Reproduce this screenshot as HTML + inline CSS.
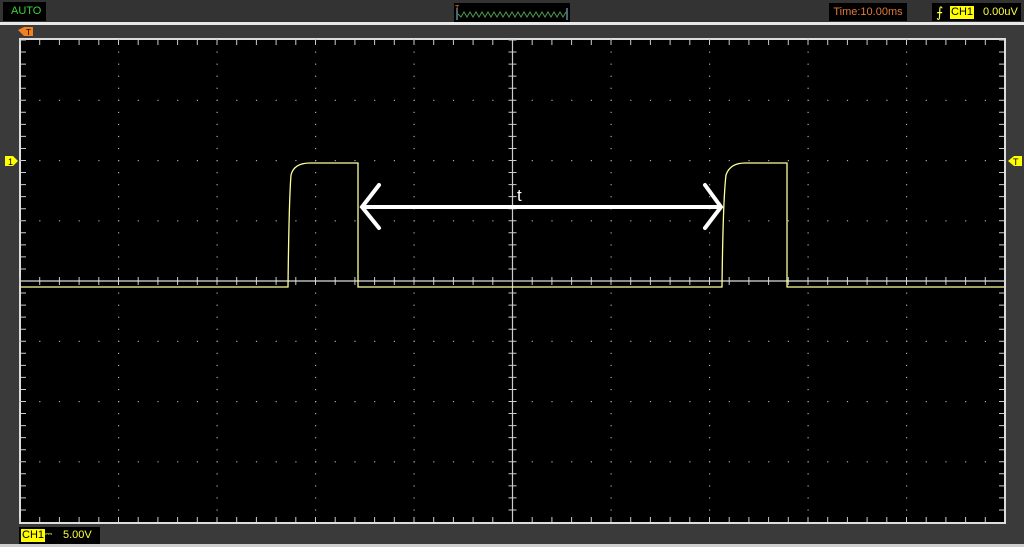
<!DOCTYPE html>
<html><head><meta charset="utf-8"><style>
body{margin:0;width:1024px;height:547px;background:#3a3a3a;overflow:hidden;font-family:"Liberation Sans",sans-serif;position:relative}
.top{position:absolute;left:0;top:0;width:1024px;height:22px;background:#333}
.line{position:absolute;left:0;top:22px;width:1024px;height:3px;background:#e8e8e8}
.box{position:absolute;background:#000;font-size:11px;line-height:18px}
</style></head><body>
<div class="top"></div><div class="line"></div>
<div class="box" style="left:3px;top:2px;width:43px;height:19px;color:#3fcf3f;padding-left:8px;box-sizing:border-box">AUTO</div>
<div class="box" style="left:829px;top:3px;width:78px;height:18px;color:#e07a3a;text-align:center">Time:10.00ms</div>
<div class="box" style="left:932px;top:3px;width:89px;height:18px;color:#ffff40"><span style="position:absolute;left:4px;top:0;font-size:14px">&#x2A0D;</span><span style="position:absolute;left:18px;top:3px;height:13px;line-height:13px;background:#ffff00;color:#000;padding:0 1px">CH1</span><span style="position:absolute;left:51px;top:0">0.00uV</span></div>
<div class="box" style="left:19px;top:527px;width:81px;height:17px;color:#ffff40;line-height:17px"><span style="position:absolute;left:2px;top:2px;height:13px;line-height:13px;background:#ffff00;color:#000;padding:0 1px">CH1</span><span style="position:absolute;left:26px;top:-1px;font-size:9px">&#x2393;</span><span style="position:absolute;left:44px;top:0">5.00V</span></div>
<div style="position:absolute;left:0;top:544px;width:1024px;height:3px;background:#cfcfcf"></div>
<svg width="1024" height="547" style="position:absolute;left:0;top:0">
<rect x="454" y="3" width="116" height="19" fill="#000"/>
<path d="M457,8V20M567,8V20" stroke="#7ac" stroke-width="1.2"/>
<path id="zz" fill="none" stroke="#4a9a4a" stroke-width="1"/>
<text x="455" y="10" fill="#e07a3a" font-size="7">T</text>
<path d="M18,30 L24,27 H33 V36 H24 Z" fill="#f08020"/><text x="26" y="35" font-size="8" fill="#000">T</text>
<path d="M5,156 H13 L18,161 L13,166 H5 Z" fill="#ffff00"/><text x="8" y="165" font-size="9" fill="#000">1</text>
<path d="M1022,156 H1014 L1008,161 L1014,166 H1022 Z" fill="#ffff00"/><text x="1013" y="165" font-size="9" fill="#000">T</text>
<rect x="20" y="39" width="985" height="484" fill="#000" stroke="#ddd" stroke-width="2"/>
<g id="g"></g>
<line x1="20" y1="281" x2="1005" y2="281" stroke="#ddd" stroke-width="1.2"/>
<line x1="512.5" y1="40" x2="512.5" y2="522" stroke="#ccc" stroke-width="1.2"/>
<path d="M21,287 H288 Q289,200 291,175 Q294,163 310,163 H358 V287 H722 Q723,200 726,175 Q730,163 745,163 H787 V287 H1004" fill="none" stroke="#ffff99" stroke-width="1.3"/>
<path d="M362,207 H720" stroke="#fff" stroke-width="4"/>
<path d="M379,185 L362,207 L379,228 M705,185 L721,207 L705,228" fill="none" stroke="#fff" stroke-width="4" stroke-linecap="round"/>
<text x="517" y="201" fill="#fff" font-size="17">t</text>
</svg>
<script>
var g=document.getElementById('g'),s='';
var x0=20,x1=1005,y0=40,y1=522,dx=(x1-x0)/10,dy=(y1-y0)/8;
for(var i=1;i<10;i++){var x=x0+i*dx;for(var y=y0;y<y1;y+=dy/5)s+='<rect x="'+(x-0.5)+'" y="'+(y-0.5)+'" width="1.2" height="1.2" fill="#aaa"/>';}
for(var j=1;j<8;j++){var y=y0+j*dy;for(var x=x0;x<x1;x+=dx/5)s+='<rect x="'+(x-0.5)+'" y="'+(y-0.5)+'" width="1.2" height="1.2" fill="#aaa"/>';}
var xc=x0+5*dx;
for(var x=x0;x<x1;x+=dx/5){s+='<path d="M'+x+',40v5M'+x+',522v-5M'+x+',277v8" stroke="#ccc"/>';}
for(var y=y0;y<y1;y+=dy/5){s+='<path d="M21,'+y+'h5M1004,'+y+'h-5M'+(xc-4)+','+y+'h8" stroke="#ccc"/>';}
g.innerHTML=s;
var z='M458,14';for(var k=0;k<36;k++){z+=' L'+(461+k*3)+','+(k%2?12:17);}
document.getElementById('zz').setAttribute('d',z);
</script>
</body></html>
